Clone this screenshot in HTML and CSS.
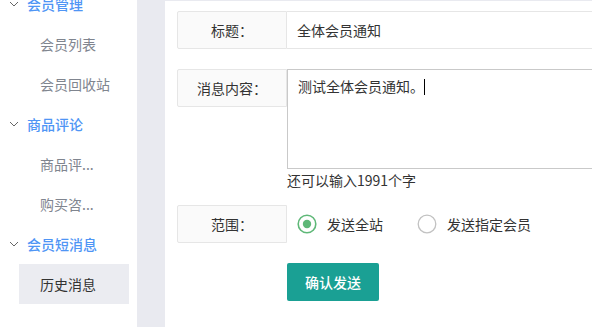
FILE: index.html
```html
<!DOCTYPE html>
<html lang="zh-CN">
<head>
    <meta charset="UTF-8">
    <meta name="viewport" content="width=device-width, initial-scale=1.0">
    <title>会员短消息</title>
    <link rel="stylesheet" href="styles.css">
</head>
<body>
    <div class="sidebar">
        <ul class="menu">
            <li class="group">
                <div class="group-title"><svg class="chevron" viewBox="0 0 10 6"><path d="M1 1l4 4 4-4"/></svg>会员管理</div>
                <ul class="sub">
                    <li>会员列表</li>
                    <li>会员回收站</li>
                </ul>
            </li>
            <li class="group">
                <div class="group-title"><svg class="chevron" viewBox="0 0 10 6"><path d="M1 1l4 4 4-4"/></svg>商品评论</div>
                <ul class="sub">
                    <li>商品评...</li>
                    <li>购买咨...</li>
                </ul>
            </li>
            <li class="group">
                <div class="group-title"><svg class="chevron" viewBox="0 0 10 6"><path d="M1 1l4 4 4-4"/></svg>会员短消息</div>
                <ul class="sub">
                    <li class="active">历史消息</li>
                </ul>
            </li>
        </ul>
    </div>

    <div class="main">
        <div class="panel">
            <div class="form-item">
                <label class="form-label">标题：</label>
                <div class="input-block">
                    <div class="input">全体会员通知</div>
                </div>
            </div>

            <div class="form-item">
                <label class="form-label">消息内容：</label>
                <div class="input-block">
                    <div class="textarea">测试全体会员通知。<span class="caret"></span></div>
                    <div class="hint">还可以输入1991个字</div>
                </div>
            </div>

            <div class="form-item">
                <label class="form-label">范围：</label>
                <div class="radio-group">
                    <div class="radio checked">
                        <svg class="radio-icon" viewBox="0 0 20 20"><circle class="ring" cx="10" cy="10" r="8.8"/><circle class="dot" cx="10" cy="10" r="4.2"/></svg>
                        <span>发送全站</span>
                    </div>
                    <div class="radio">
                        <svg class="radio-icon" viewBox="0 0 20 20"><circle class="ring" cx="10" cy="10" r="8.8"/></svg>
                        <span>发送指定会员</span>
                    </div>
                </div>
            </div>

            <div class="form-actions">
                <button class="btn">确认发送</button>
            </div>
        </div>
    </div>
</body>
</html>
```

FILE: styles.css
```css
* {
    box-sizing: border-box;
}
body {
    margin: 0;
    height: 327px;
    display: flex;
    overflow: hidden;
    font-family: "Noto Sans CJK SC", "Liberation Sans", sans-serif;
    font-size: 14px;
    color: #333;
    background-color: #e9eaf0;
}
ul {
    list-style: none;
    margin: 0;
    padding: 0;
}

/* 左侧菜单 */
.sidebar {
    width: 137px;
    flex-shrink: 0;
    background-color: #fff;
    overflow: hidden;
}
.menu {
    margin-top: -16px;
}
.group-title {
    display: flex;
    align-items: center;
    height: 40px;
    padding-left: 9px;
    color: #4f95f5;
    font-weight: 500;
}
.chevron {
    width: 10px;
    height: 6px;
    margin-right: 8px;
    fill: none;
    stroke: #666;
    stroke-width: 1;
}
.sub li {
    height: 40px;
    line-height: 40px;
    padding-left: 40px;
    color: #80858f;
    white-space: nowrap;
}
.sub li.active {
    width: 110px;
    margin-left: 19px;
    padding-left: 21px;
    background-color: #ebecf1;
    color: #333;
}

/* 右侧内容 */
.main {
    flex: 1;
    padding-left: 28px;
    padding-top: 1px;
    min-width: 0;
}
.panel {
    height: 100%;
    background-color: #fff;
    padding: 10px 0 0 12px;
    overflow: hidden;
}
.form-item {
    display: flex;
    align-items: flex-start;
    margin-bottom: 20px;
}
.form-item:nth-child(2) {
    margin-bottom: 15px;
}
.form-label {
    width: 110px;
    height: 38px;
    line-height: 36px;
    flex-shrink: 0;
    text-align: center;
    background-color: #fafafa;
    border: 1px solid #e6e6e6;
    border-radius: 2px 0 0 2px;
}
.input-block {
    width: 360px;
    flex-shrink: 0;
}
.input {
    height: 38px;
    line-height: 36px;
    padding-left: 10px;
    border: 1px solid #e6e6e6;
    border-left: none;
}
.textarea {
    height: 100px;
    padding: 6px 10px;
    line-height: 20px;
    border: 1px solid #c9c9c9;
}
.caret {
    display: inline-block;
    width: 1px;
    height: 16px;
    vertical-align: -3px;
    background-color: #000;
}
.hint {
    line-height: 20px;
    padding-top: 1px;
}
.radio-group {
    display: flex;
    align-items: center;
    height: 38px;
    padding-left: 10px;
}
.radio {
    display: flex;
    align-items: center;
    margin-right: 34px;
}
.radio-icon {
    width: 20px;
    height: 20px;
    margin-right: 10px;
}
.ring {
    fill: none;
    stroke: #c2c2c2;
    stroke-width: 1.3;
}
.checked .ring {
    stroke: #5fb878;
    stroke-width: 1.6;
}
.dot {
    fill: #5fb878;
}
.form-actions {
    padding-left: 110px;
}
.btn {
    height: 38px;
    padding: 0 18px;
    border: none;
    border-radius: 2px;
    background-color: #1aa094;
    color: #fff;
    font-family: inherit;
    font-size: 14px;
    font-weight: 500;
    cursor: pointer;
}
```
